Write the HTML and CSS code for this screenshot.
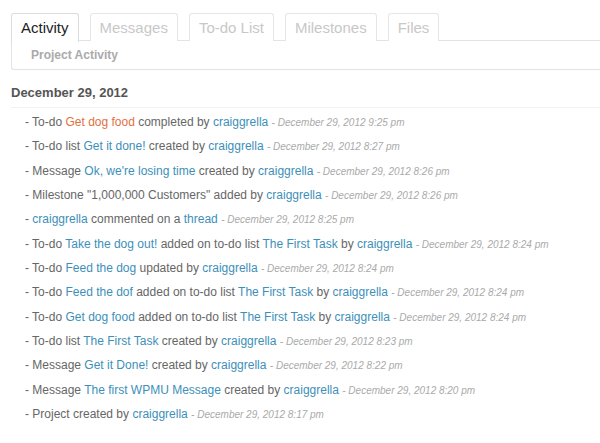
FILE: index.html
```html
<!DOCTYPE html>
<html>
<head>
    <title>Project Activity</title>
    <link rel="stylesheet" href="styles.css">
</head>
<body>
    <div class="tabs">
        <a class="tab active" href="#">Activity</a>
        <a class="tab" href="#">Messages</a>
        <a class="tab" href="#">To-do List</a>
        <a class="tab" href="#">Milestones</a>
        <a class="tab" href="#">Files</a>
    </div>
    <div class="panel">
        <h3>Project Activity</h3>
    </div>

    <div class="activity">
        <h2>December 29, 2012</h2>
        <ul>
            <li>- To-do <a class="done" href="#">Get dog food</a> completed by <a href="#">craiggrella</a> <span class="time">- December 29, 2012 9:25 pm</span></li>
            <li>- To-do list <a href="#">Get it done!</a> created by <a href="#">craiggrella</a> <span class="time">- December 29, 2012 8:27 pm</span></li>
            <li>- Message <a href="#">Ok, we're losing time</a> created by <a href="#">craiggrella</a> <span class="time">- December 29, 2012 8:26 pm</span></li>
            <li>- Milestone "1,000,000 Customers" added by <a href="#">craiggrella</a> <span class="time">- December 29, 2012 8:26 pm</span></li>
            <li>- <a href="#">craiggrella</a> commented on a <a href="#">thread</a> <span class="time">- December 29, 2012 8:25 pm</span></li>
            <li>- To-do <a href="#">Take the dog out!</a> added on to-do list <a href="#">The First Task</a> by <a href="#">craiggrella</a> <span class="time">- December 29, 2012 8:24 pm</span></li>
            <li>- To-do <a href="#">Feed the dog</a> updated by <a href="#">craiggrella</a> <span class="time">- December 29, 2012 8:24 pm</span></li>
            <li>- To-do <a href="#">Feed the dof</a> added on to-do list <a href="#">The First Task</a> by <a href="#">craiggrella</a> <span class="time">- December 29, 2012 8:24 pm</span></li>
            <li>- To-do <a href="#">Get dog food</a> added on to-do list <a href="#">The First Task</a> by <a href="#">craiggrella</a> <span class="time">- December 29, 2012 8:24 pm</span></li>
            <li>- To-do list <a href="#">The First Task</a> created by <a href="#">craiggrella</a> <span class="time">- December 29, 2012 8:23 pm</span></li>
            <li>- Message <a href="#">Get it Done!</a> created by <a href="#">craiggrella</a> <span class="time">- December 29, 2012 8:22 pm</span></li>
            <li>- Message <a href="#">The first WPMU Message</a> created by <a href="#">craiggrella</a> <span class="time">- December 29, 2012 8:20 pm</span></li>
            <li>- Project created by <a href="#">craiggrella</a> <span class="time">- December 29, 2012 8:17 pm</span></li>
        </ul>
    </div>
</body>
</html>
```

FILE: styles.css
```css
body {
    margin: 0;
    padding: 13px 0 0 11px;
    font-family: "Liberation Sans", Arial, sans-serif;
    color: #555;
    background: #fff;
    overflow: hidden;
}
a {
    color: #3d8fb9;
    text-decoration: none;
}
.tabs {
    display: flex;
    gap: 11px;
    height: 28px;
}
.tab {
    display: block;
    padding: 0 9px;
    height: 27px;
    line-height: 27px;
    font-size: 15px;
    color: #c8c8c8;
    border: 1px solid #e6e6e6;
    border-bottom: none;
    border-radius: 3px 3px 0 0;
    background: #fff;
}
.tab.active {
    color: #222;
    border-color: #dcdcdc;
    height: 28px;
    position: relative;
    z-index: 1;
}
.panel {
    margin-top: -1px;
    border: 1px solid #e3e3e3;
    border-right: none;
    border-radius: 0 0 0 3px;
    height: 28px;
    padding-left: 19px;
}
.panel h3 {
    margin: 0;
    font-size: 12px;
    line-height: 28px;
    color: #aaa;
    font-weight: bold;
}
.activity h2 {
    margin: 15px 0 0;
    font-size: 13px;
    font-weight: bold;
    color: #555;
    padding-bottom: 7px;
    border-bottom: 1px solid #f2f2f2;
}
.activity ul {
    list-style: none;
    margin: 0;
    padding: 2px 0 0 14px;
}
.activity li {
    font-size: 12px;
    line-height: 24.33px;
    height: 24.33px;
    color: #666;
}
.activity a.done {
    color: #e2703f;
}
.time {
    font-size: 10px;
    line-height: 1;
    font-style: italic;
    color: #aaa;
}
```
